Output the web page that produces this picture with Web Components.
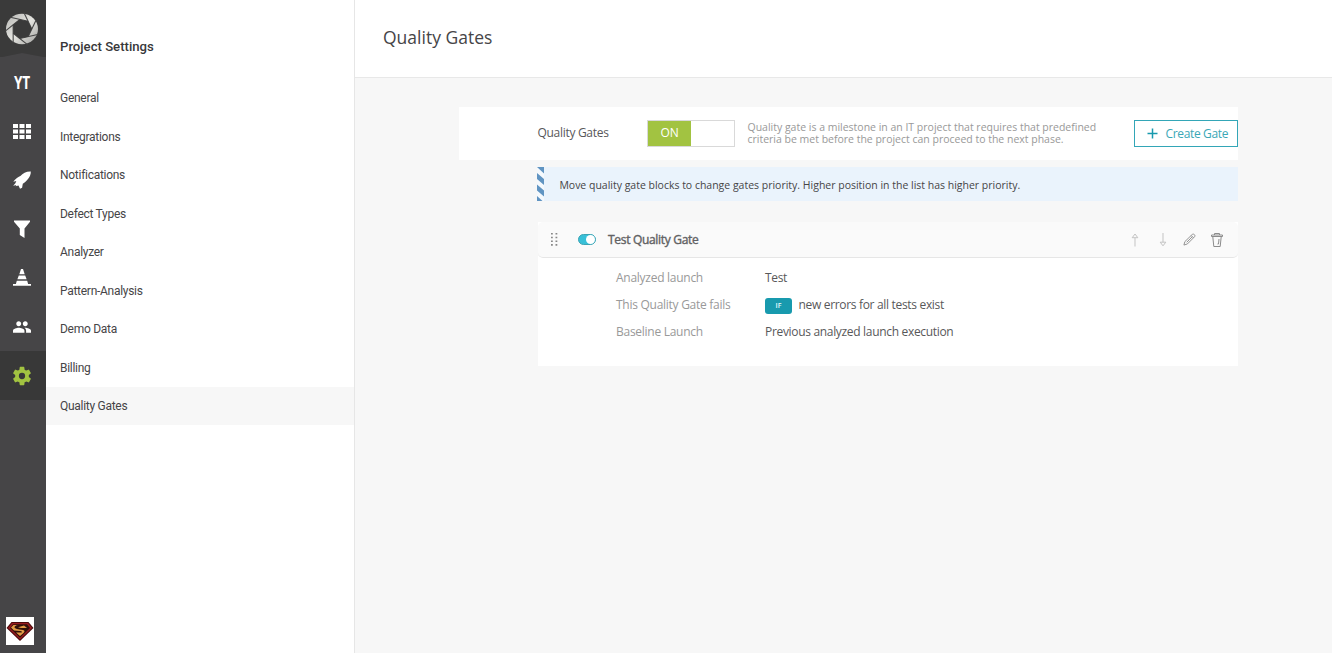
<!DOCTYPE html>
<html lang="en">
<head>
<meta charset="utf-8">
<title>Quality Gates</title>
<style>
html,body{margin:0;height:100%;overflow:hidden;background:#f7f7f7}
</style>
</head>
<body>
<rp-app></rp-app>
<script>
const define = (name, html, setup) => customElements.define(name, class extends HTMLElement {
  constructor() {
    super();
    this.attachShadow({ mode: 'open' }).innerHTML = html;
  }
  connectedCallback() { if (setup) setup(this, this.shadowRoot); }
});

// Camera aperture: a ring with a seven-sided opening, each side extended to the rim.
const turns = Array.from({ length: 7 }, (_, i) => i * 360 / 7);
const opening = turns.map(a => {
  const t = (a + 180 + 180 / 7) * Math.PI / 180;
  return `${(9.8 * Math.cos(t)).toFixed(2)},${(9.8 * Math.sin(t)).toFixed(2)}`;
}).join(' ');
const blades = turns.map(a => `<path transform="rotate(${a.toFixed(2)})" d="M-8.830-4.250V14"/>`).join('');

const icons = {
  logo: `<svg width="34" height="34" viewBox="-17 -17 34 34"><defs><linearGradient id="g" x1="0" y1="0" x2="1" y2="1"><stop offset="0" stop-color="#b5b5b3"/><stop offset=".5" stop-color="#e4e4df"/><stop offset="1" stop-color="#a2a2a0"/></linearGradient></defs><ellipse rx="16" ry="15.200" fill="url(#g)"/><g stroke="#454545" stroke-width="1.100">${blades}</g><polygon points="${opening}" fill="#3a3a3a"/></svg>`,
  grid: `<svg width="18" height="15" viewBox="0 0 18 15" fill="#fff"><path d="M0 0h5v4H0zM6.5 0h5v4h-5zM13 0h5v4h-5zM0 5.5h5v4H0zM6.5 5.5h5v4h-5zM13 5.5h5v4h-5zM0 11h5v4H0zM6.5 11h5v4h-5zM13 11h5v4h-5z"/></svg>`,
  rocket: `<svg width="18" height="18" viewBox="0 0 18 18" fill="#fff"><path d="M17.8.4C13.4.2 9.8 2.2 7.4 5.1 5.7 5.6 2.2 8 .3 10.8L3.3 10.1 2.4 12.3.2 14.8 3.3 13.9 2.7 15.2 4.5 14.8 5.5 14.5 7 17.8 9.1 16.8 9.8 12.8C13.9 10 18 5.5 17.8.4Z"/></svg>`,
  funnel: `<svg width="16" height="18" viewBox="0 0 16 18" fill="#fff"><path d="M0 .5h16v1.3l-5.500 6.800V18L5.800 15V8.600L0 1.800Z"/></svg>`,
  cone: `<svg width="18" height="19" viewBox="0 0 18 19" fill="#fff"><path d="M8 1h2l1.700 5.200H6.300zM5.800 7.600h6.400l1.400 3.700H4.400zM3.800 12.800h10.400l.9 3.200H18v1.800H0V16h2.900z"/></svg>`,
  people: `<svg width="18" height="12" viewBox="1 5 22 14" fill="#fff"><path d="M16 11c1.700 0 3-1.300 3-3s-1.300-3-3-3-3 1.300-3 3 1.300 3 3 3m-8 0c1.700 0 3-1.300 3-3S9.700 5 8 5 5 6.300 5 8s1.300 3 3 3m0 2c-2.300 0-7 1.200-7 3.500V19h14v-2.500C15 14.200 10.300 13 8 13m8 0c-.3 0-.6 0-1 .05 1.200.84 2 1.970 2 3.450V19h6v-2.500c0-2.300-4.700-3.500-7-3.500"/></svg>`,
  gear: `<svg width="20" height="20" viewBox="1.500 1.500 21 21" fill="#a2c341"><path d="M19.140 12.940c.04-.3.060-.610.060-.940s-.020-.640-.070-.940l2.030-1.580a.5.5 0 0 0 .120-.610l-1.920-3.320a.49.49 0 0 0-.590-.220l-2.390.960a7 7 0 0 0-1.620-.940L14.400 2.810a.48.48 0 0 0-.480-.410h-3.840a.47.47 0 0 0-.470.410L9.250 5.350c-.590.240-1.130.570-1.620.940l-2.390-.960a.48.48 0 0 0-.590.220L2.740 8.870a.47.47 0 0 0 .120.610l2.030 1.580a6 6 0 0 0-.020 1.880l-2.030 1.580a.5.5 0 0 0-.120.610l1.920 3.320c.120.220.370.290.590.220l2.390-.960c.500.380 1.030.700 1.620.940l.360 2.540c.050.240.240.410.480.410h3.840c.240 0 .440-.170.470-.410l.360-2.540a7 7 0 0 0 1.620-.940l2.390.960c.220.080.470 0 .590-.220l1.920-3.320a.47.47 0 0 0-.120-.610zM12 15.300a3.300 3.300 0 1 1 0-6.600 3.300 3.300 0 0 1 0 6.600"/></svg>`,
  avatar: `<svg width="28" height="28" viewBox="0 0 28 28"><path fill="#fff" d="M0 0h28v28H0z"/><path fill="#4b0b0c" d="M5.500 5h17L27.500 11 14 24 .5 11Z"/><path fill="#981b20" d="M6 6h16l4 5L14 22.500 2 11Z"/><path fill="#30100b" d="M7 7.200h14l3 3.800-10 9.800L4 11Z"/><path fill="#e39a45" d="M5 10.500 7.500 8H12Q8.500 8.500 8.500 10.500 9 12 17 13 20 14 17 16.500L14 19 10 15.500h5.500Q17 14.500 14 14L8 13.500Z"/><path fill="#e39a45" d="m12 10.200 6-1.700 3 2.500h-6z"/></svg>`,
  up: `<svg width="8" height="14" viewBox="0 0 8 14" fill="none" stroke="#c3c3c3"><path d="M4 5v8.500M1.200 4.700 4 1l2.800 3.700Z"/></svg>`,
  down: `<svg width="8" height="14" viewBox="0 0 8 14" fill="none" stroke="#c3c3c3"><path d="M4 0v9M1.200 9.200 4 12.800l2.800-3.600Z"/></svg>`,
  pencil: `<svg width="13" height="13" viewBox="0 0 14 14" fill="none" stroke="#8c8c8c" stroke-linejoin="round"><path d="M1 13 2 9.300 10 1.500Q11.200.7 12.300 1.800T12.500 4L4.700 11.800ZM8.800 2.700l2.500 2.500M4 10 10 4"/></svg>`,
  trash: `<svg width="12" height="14" viewBox="0 0 12 14" fill="none" stroke="#8c8c8c"><path d="M.5 3.500V2h11v1.500M3.500 2V.5h5V2M.5 3.500h11M1.800 3.800l1 9.700h6.400l1-9.700M8 6l-.5 5H6.500"/></svg>`,
  plus: `<svg width="11" height="11" viewBox="0 0 11 11" stroke="#189aae" stroke-width="1.500"><path d="M5.500 .5v10M.5 5.500h10"/></svg>`,
  drag: `<svg width="7" height="13" viewBox="0 0 7 13" fill="#888"><path d="M0 0h1.800v1.600H0zM4.500 0h1.800v1.600H4.500zM0 3.700h1.800v1.600H0zM4.500 3.700h1.800v1.600H4.500zM0 7.400h1.800V9H0zM4.500 7.400h1.800V9H4.500zM0 11.100h1.800v1.600H0zM4.500 11.100h1.800v1.600H4.500z"/></svg>`
};

define('rp-icon', `<style>:host{display:inline-flex;flex:none}svg{display:block}</style><span></span>`,
  (el, root) => { root.querySelector('span').innerHTML = icons[el.getAttribute('name')]; });

define('rail-item', `<style>
  :host{display:flex;height:49px;align-items:center;justify-content:center;padding-right:2px;box-sizing:border-box;color:#fff;font:700 17px/20px "Open Sans",sans-serif}
  :host([active]){background:#383838}
</style><slot></slot>`);

define('rp-rail', `<style>
  :host{display:flex;flex-direction:column;width:46px;height:100%;background:#464547;flex:none}
  .top{height:57.400px;box-sizing:border-box;padding:12px 0 0 5px;background:#3a3a3a;clip-path:polygon(0 0,100% 0,100% 100%,48% 53px,0 100%)}
  .code{display:inline-block;transform:scaleX(.8);letter-spacing:-.4px;padding-top:2px}
  .grid{padding-top:1px}
  .avatar{margin:auto 0 8px 6px}
</style>
<div class="top"><rp-icon name="logo"></rp-icon></div>
<rail-item><span class="code">YT</span></rail-item>
<rail-item><rp-icon class="grid" name="grid"></rp-icon></rail-item>
<rail-item><rp-icon name="rocket"></rp-icon></rail-item>
<rail-item><rp-icon name="funnel"></rp-icon></rail-item>
<rail-item><rp-icon name="cone"></rp-icon></rail-item>
<rail-item><rp-icon name="people"></rp-icon></rail-item>
<rail-item active><rp-icon name="gear"></rp-icon></rail-item>
<rp-icon class="avatar" name="avatar"></rp-icon>`);

define('menu-item', `<style>
  :host{display:block;height:38.500px;box-sizing:border-box;padding:.5px 0 0 14px;font:12px/38px Roboto,sans-serif;letter-spacing:-.28px;color:#464547}
  :host([active]){background:#f7f7f7}
</style><slot></slot>`);

define('settings-menu', `<style>
  :host{display:block;width:308px;background:#fff;flex:none}
  h2{margin:0;padding:37px 0 0 14px;height:78.500px;box-sizing:border-box;font:500 13.150px/20px Roboto,sans-serif;color:#38383a}
</style>
<h2>Project Settings</h2>
<menu-item>General</menu-item><menu-item>Integrations</menu-item><menu-item>Notifications</menu-item>
<menu-item>Defect Types</menu-item><menu-item>Analyzer</menu-item><menu-item>Pattern-Analysis</menu-item>
<menu-item>Demo Data</menu-item><menu-item>Billing</menu-item><menu-item active>Quality Gates</menu-item>`);

define('on-off-switch', `<style>
  :host{display:flex;width:88px;height:27px;box-sizing:border-box;border:1px solid #d9d9d9;background:#fff;flex:none}
  span{width:43px;background:#a2c341;color:#fff;text-align:center;font:12px/23px "Open Sans",sans-serif;letter-spacing:-.3px}
</style><span><slot></slot></span>`);

define('ghost-button', `<style>
  :host{display:flex;align-items:center;width:104px;height:27px;box-sizing:border-box;border:1px solid #33a6b7;padding-left:12px;gap:7.500px;color:#3aa7b6;background:#fff;font:12px/24px "Open Sans",sans-serif;letter-spacing:-.35px;white-space:nowrap;flex:none}
</style><rp-icon name="plus"></rp-icon><span><slot></slot></span>`);

define('gates-toolbar', `<style>
  :host{display:flex;height:52.500px;box-sizing:border-box;background:#fff;padding:13px 0 0 78.500px;font:12px/24px "Open Sans",sans-serif;color:#58585a}
  .label{width:109.500px;flex:none;letter-spacing:-.3px;padding-top:1px}
  p{margin:1px 0 0 12.500px;width:386.500px;flex:none;font-size:10.490px;line-height:12px;color:#999;white-space:nowrap}
</style>
<span class="label">Quality Gates</span><on-off-switch>ON</on-off-switch>
<p>Quality gate is a milestone in an IT project that requires that predefined<br>criteria be met before the project can proceed to the next phase.</p>
<ghost-button>Create Gate</ghost-button>`);

define('info-note', `<style>
  :host{display:flex;height:34px;background:#eaf3fc;font:10.490px/35px "Open Sans",sans-serif;color:#464547}
  i{width:7px;margin-right:15.400px;flex:none}
  span{padding-top:.6px}
  svg{display:block}
</style><i><svg width="7" height="34"><path fill="#f5f9fd" d="M0 0h7v34H0z"/><path fill="#6094c2" d="M0 0h7v6.500zM0 6l7 6v6L0 12zM0 17.500l7 6v6l-7-6zM0 29l5.500 5H0z"/></svg></i><span><slot></slot></span>`);

define('mini-switch', `<style>
  :host{display:flex;width:18px;height:11px;box-sizing:border-box;border:1px solid #3da4b4;border-radius:6px;background:#38c0d8;justify-content:flex-end;flex:none}
  i{width:9px;height:9px;border-radius:50%;background:#fff}
</style><i></i>`);

define('gate-row', `<style>
  :host{display:grid;grid-template-columns:149px 1fr;height:27px;font:12px/20px "Open Sans",sans-serif;letter-spacing:-.32px;color:#58585a;white-space:nowrap}
  .k{color:#999;letter-spacing:-.27px}
</style><span class="k"><slot name="key"></slot></span><span><slot></slot></span>`);

define('if-badge', `<style>
  :host{display:inline-block;width:27px;height:16px;margin:3px 6.500px 0 0;vertical-align:top;border-radius:3px;background:#189aae;color:#e8fbff;text-align:center;font:600 7px/16px "Open Sans",sans-serif;letter-spacing:0}
</style><slot></slot>`);

define('gate-card', `<style>
  :host{display:block;height:144px;background:#fff}
  header{display:flex;align-items:center;height:36px;box-sizing:border-box;background:#fafafa;border-bottom:1px solid #e6e6e6;border-radius:5px;padding:0 15.500px 0 13px}
  mini-switch{margin:0 12px 0 20px}
  h3{margin:0;padding-top:2px;font:400 12px/20px "Open Sans",sans-serif;letter-spacing:-.31px;color:#626264;-webkit-text-stroke:.4px #626264}
  .tools{margin-left:auto;display:flex;align-items:center;gap:14.500px;padding-top:1px}
  .tools rp-icon:nth-child(1){margin-right:5px}
  .tools rp-icon:nth-child(2){margin-right:2px}
  .body{padding:10.500px 0 0 78px}
</style>
<header><rp-icon name="drag"></rp-icon><mini-switch></mini-switch><h3>Test Quality Gate</h3>
<div class="tools"><rp-icon name="up"></rp-icon><rp-icon name="down"></rp-icon><rp-icon name="pencil"></rp-icon><rp-icon name="trash"></rp-icon></div></header>
<div class="body">
<gate-row><span slot="key">Analyzed launch</span>Test</gate-row>
<gate-row><span slot="key">This Quality Gate fails</span><if-badge>IF</if-badge>new errors for all tests exist</gate-row>
<gate-row><span slot="key">Baseline Launch</span>Previous analyzed launch execution</gate-row>
</div>`);

define('gates-page', `<style>
  :host{display:block;flex:1;border-left:1px solid #e6e6e6;background:#f7f7f7}
  h1{margin:0;height:78px;box-sizing:border-box;border-bottom:1px solid #e8e8e8;background:#fff;padding:25px 0 0 28px;font:17.500px/24px "Open Sans",sans-serif;color:#464547}
  main{width:779px;margin:29.400px 0 0 104px}
  info-note{margin:7.400px 0 0 78px}
  gate-card{margin:20.700px 0 0 79px}
</style>
<h1>Quality Gates</h1>
<main><gates-toolbar></gates-toolbar>
<info-note>Move quality gate blocks to change gates priority. Higher position in the list has higher priority.</info-note>
<gate-card></gate-card></main>`);

define('rp-app', `<style>:host{display:flex;width:1332px;height:653px}</style><rp-rail></rp-rail><settings-menu></settings-menu><gates-page></gates-page>`);
</script>
</body>
</html>
